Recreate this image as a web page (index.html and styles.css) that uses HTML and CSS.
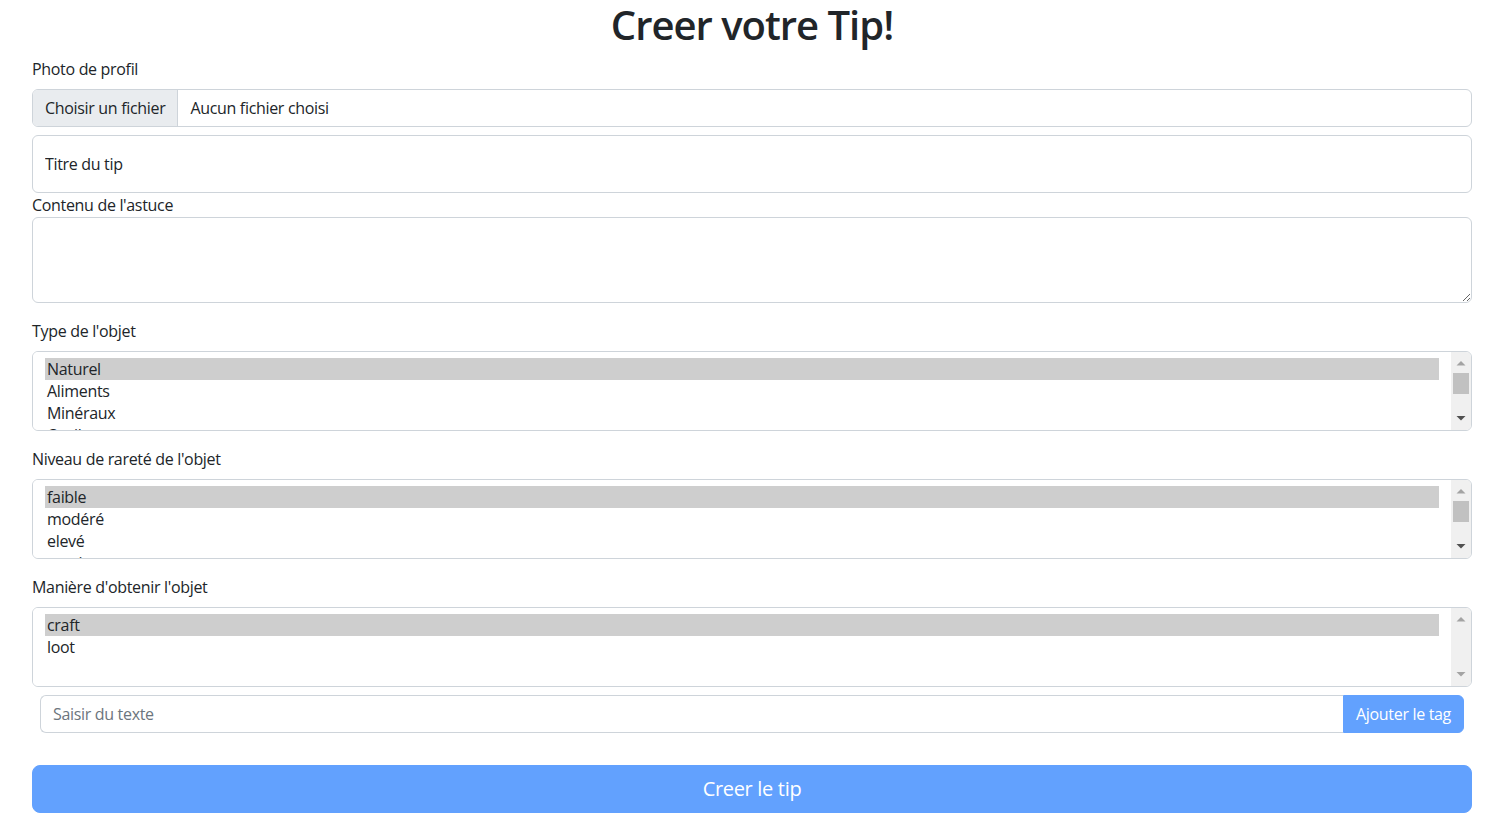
FILE: index.html
```html
<!DOCTYPE html>
<html lang="fr">
<head>
<meta charset="utf-8">
<title>Creer votre Tip!</title>
<link rel="stylesheet" href="styles.css">
</head>
<body>
<main class="page">
  <h1 class="title">Creer votre Tip!</h1>
  <form class="tip-form">
    <label class="form-label">Photo de profil</label>
    <div class="file-input">
      <span class="file-btn">Choisir un fichier</span>
      <span class="file-name">Aucun fichier choisi</span>
    </div>

    <input class="control floating-input" type="text" placeholder="Titre du tip">

    <label class="form-label tight">Contenu de l'astuce</label>
    <textarea class="control textarea"></textarea>

    <label class="form-label section">Type de l'objet</label>
    <div class="listbox">
      <select class="listbox-select" multiple>
        <option selected>Naturel</option>
        <option>Aliments</option>
        <option>Minéraux</option>
        <option>Outils</option>
        <option>Armes</option>
      </select>
      <div class="scrollbar" aria-hidden="true">
        <span class="sb-btn"><svg width="20" height="20" viewBox="0 0 20 20"><path d="M5.5 13.5h9L10 9z" fill="#a3a3a3"/></svg></span>
        <span class="sb-track"><span class="sb-thumb"></span></span>
        <span class="sb-btn"><svg width="20" height="20" viewBox="0 0 20 20"><path d="M5.5 6h9L10 10.5z" fill="#505050"/></svg></span>
      </div>
    </div>

    <label class="form-label section">Niveau de rareté de l'objet</label>
    <div class="listbox">
      <select class="listbox-select" multiple>
        <option selected>faible</option>
        <option>modéré</option>
        <option>elevé</option>
        <option>exotique</option>
        <option>légendaire</option>
      </select>
      <div class="scrollbar" aria-hidden="true">
        <span class="sb-btn"><svg width="20" height="20" viewBox="0 0 20 20"><path d="M5.5 13.5h9L10 9z" fill="#a3a3a3"/></svg></span>
        <span class="sb-track"><span class="sb-thumb"></span></span>
        <span class="sb-btn"><svg width="20" height="20" viewBox="0 0 20 20"><path d="M5.5 6h9L10 10.5z" fill="#505050"/></svg></span>
      </div>
    </div>

    <label class="form-label section">Manière d'obtenir l'objet</label>
    <div class="listbox">
      <select class="listbox-select" multiple>
        <option selected>craft</option>
        <option>loot</option>
      </select>
      <div class="scrollbar" aria-hidden="true">
        <span class="sb-btn"><svg width="20" height="20" viewBox="0 0 20 20"><path d="M5.5 13.5h9L10 9z" fill="#a3a3a3"/></svg></span>
        <span class="sb-track"></span>
        <span class="sb-btn"><svg width="20" height="20" viewBox="0 0 20 20"><path d="M5.5 6h9L10 10.5z" fill="#a3a3a3"/></svg></span>
      </div>
    </div>

    <div class="tag-group">
      <input class="tag-input" type="text" placeholder="Saisir du texte">
      <button class="tag-btn" type="button" disabled>Ajouter le tag</button>
    </div>

    <button class="submit-btn" type="submit" disabled>Creer le tip</button>
  </form>
</main>
</body>
</html>
```

FILE: styles.css
```css
* { box-sizing: border-box; }
html, body { margin: 0; }
body {
  font-family: "Open Sans", "Noto Sans", sans-serif;
  font-size: 16px;
  line-height: 1.5;
  letter-spacing: -0.02em;
  color: #212529;
  background: #fff;
}
.page {
  padding: 0 35px 0 32px;
}
.title {
  margin: 0 0 8px;
  padding-top: 1px;
  font-size: 40px;
  font-weight: 600;
  line-height: 48px;
  letter-spacing: -1px;
  text-align: center;
}
.tip-form {
  display: flex;
  flex-direction: column;
}
.form-label {
  display: block;
  margin-bottom: 8px;
}
.form-label.tight { margin-bottom: 0; }
.form-label.section { margin-top: 16px; }

.file-input {
  display: flex;
  height: 38px;
  border: 1px solid #ced4da;
  border-radius: 6px;
  overflow: hidden;
  margin-bottom: 8px;
}
.file-btn {
  display: flex;
  align-items: center;
  padding: 0 12px;
  background: #e9ecef;
  border-right: 1px solid #ced4da;
}
.file-name {
  display: flex;
  align-items: center;
  padding: 0 12px;
}

.control {
  display: block;
  width: 100%;
  font: inherit;
  letter-spacing: inherit;
  color: #212529;
  background: #fff;
  border: 1px solid #ced4da;
  border-radius: 6px;
  padding: 6px 12px;
  margin: 0;
}
.floating-input {
  height: 58px;
  padding: 16px 12px;
}
.floating-input::placeholder { color: #212529; opacity: 1; }
.textarea {
  height: 86px;
  resize: vertical;
}

.listbox {
  display: flex;
  height: 80px;
  border: 1px solid #ced4da;
  border-radius: 6px;
  overflow: hidden;
  background: #fff;
}
.listbox-select {
  flex: 1;
  min-width: 0;
  height: 100%;
  margin: 0;
  border: none;
  outline: none;
  padding: 6px 12px;
  overflow: hidden;
  font: inherit;
  letter-spacing: inherit;
  color: #212529;
  background: #fff;
}
.listbox-select option {
  padding: 0 2px;
  line-height: 22px;
  height: 22px;
  color: #212529;
}
.listbox-select option:checked {
  background: #cecece linear-gradient(#cecece, #cecece);
  color: #212529;
}
.scrollbar {
  display: flex;
  flex-direction: column;
  width: 20px;
  flex: none;
  background: #f0f0f0;
}
.sb-btn {
  display: block;
  height: 20px;
  flex: none;
}
.sb-btn svg { display: block; }
.sb-track {
  flex: 1;
  display: flex;
  flex-direction: column;
  padding: 1px 2px 0;
}
.sb-thumb {
  display: block;
  height: 21px;
  background: #c1c1c1;
}

.tag-group {
  display: flex;
  margin: 8px 8px 0;
  height: 38px;
}
.tag-input {
  flex: 1;
  min-width: 0;
  font: inherit;
  letter-spacing: inherit;
  color: #212529;
  border: 1px solid #ced4da;
  border-right: none;
  border-radius: 6px 0 0 6px;
  padding: 6px 12px;
}
.tag-input::placeholder { color: #6c757d; opacity: 1; }
.tag-btn {
  font: inherit;
  letter-spacing: inherit;
  color: #fff;
  background: #62a1fe;
  border: 1px solid #62a1fe;
  border-radius: 0 6px 6px 0;
  padding: 6px 12px;
  opacity: 1;
}
.submit-btn {
  margin-top: 32px;
  height: 48px;
  width: 100%;
  font: inherit;
  font-size: 20px;
  letter-spacing: inherit;
  color: #fff;
  background: #62a1fe;
  border: 1px solid #62a1fe;
  border-radius: 8px;
}
```
